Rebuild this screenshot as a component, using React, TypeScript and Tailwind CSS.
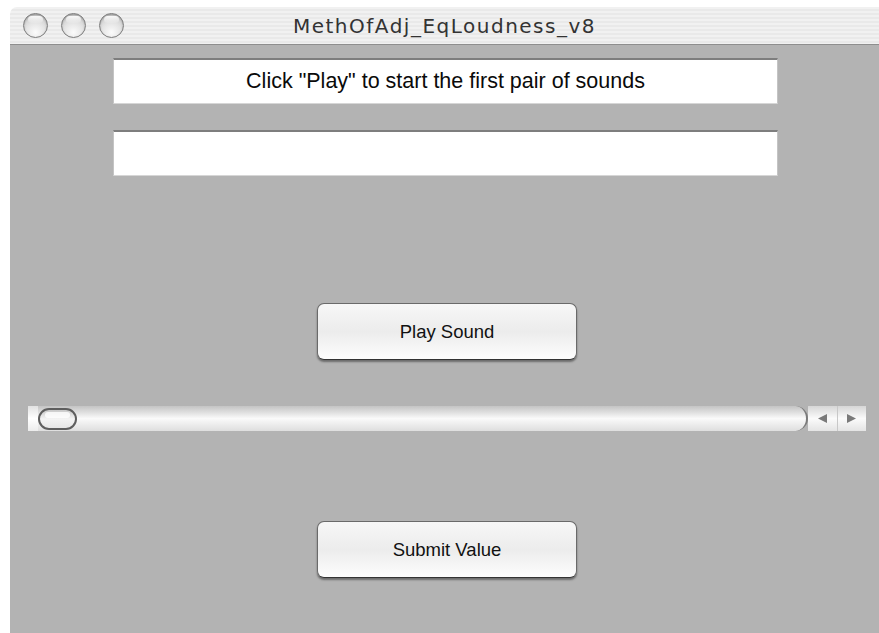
import React from 'react'

// Aqua-style window for the equal-loudness adjustment task

function TrafficLight() {
  return (
    <div className="w-[25px] h-[25px] rounded-full border border-[#7c7c7c] bg-[radial-gradient(circle_at_50%_80%,#fbfbfb_0%,#e4e4e4_45%,#bdbdbd_100%)] shadow-[inset_0_1px_2px_rgba(0,0,0,0.25)] flex justify-center">
      <div className="mt-[2px] w-[15px] h-[7px] rounded-full bg-gradient-to-b from-white/90 to-white/10" />
    </div>
  )
}

function TextField({ children }: { children?: React.ReactNode }) {
  return (
    <div className="w-[665px] h-[46px] bg-white border-t-2 border-t-[#7e7e7e] border-x border-x-[#c4c4c4] border-b border-b-[#d6d6d6] flex items-center justify-center text-[21.5px] text-[#0a0a0a] font-['Liberation_Sans',Arial,sans-serif]">
      {children}
    </div>
  )
}

function AquaButton({ label }: { label: string }) {
  return (
    <button className="w-[260px] h-[57px] rounded-[7px] border border-[#6a6a6a] border-b-[#333] bg-gradient-to-b from-[#f7f7f7] via-[#ececec] to-[#fdfdfd] shadow-[0_2px_2px_rgba(0,0,0,0.4)] flex items-center justify-center text-[18.5px] text-[#111] font-['Liberation_Sans',Arial,sans-serif]">
      {label}
    </button>
  )
}

function Scroller() {
  return (
    <div className="ml-[18px] w-[838px] h-[25px] flex">
      {/* track */}
      <div className="flex-1 flex items-center rounded-r-full border-r-2 border-r-[#7a7a7a] bg-gradient-to-b from-[#c4c4c4] via-[#fafafa] to-[#dedede]">
        <div className="h-full w-[10px] bg-gradient-to-b from-[#e2e2e2] via-white to-[#ececec]" />
        <div className="w-[39px] h-[22px] rounded-full border-2 border-[#5e5e5e] bg-gradient-to-b from-[#c8c8c8] via-[#f4f4f4] to-[#e6e6e6] flex justify-center">
          <div className="mt-[2px] w-[25px] h-[6px] rounded-full bg-white/80" />
        </div>
      </div>
      {/* arrow buttons */}
      <div className="w-[58px] flex items-center bg-gradient-to-b from-[#d6d6d6] via-[#fbfbfb] to-[#e4e4e4]">
        <div className="flex-1 flex justify-center">
          <svg width="11" height="11" viewBox="0 0 11 11"><path d="M10 1 L1 5.5 L10 10 Z" fill="#7a7a7a" /></svg>
        </div>
        <div className="w-px h-full bg-[#c8c8c8]" />
        <div className="flex-1 flex justify-center">
          <svg width="11" height="11" viewBox="0 0 11 11"><path d="M1 1 L10 5.5 L1 10 Z" fill="#7a7a7a" /></svg>
        </div>
      </div>
    </div>
  )
}

export default function App() {
  return (
    <div className="w-[879px] h-[633px] bg-white overflow-hidden pt-[7px] pl-[10px]">
      <div className="w-[869px] h-[626px] flex flex-col rounded-tl-[7px] overflow-hidden">
        {/* title bar */}
        <div className="relative h-[38px] shrink-0 flex items-center border-b border-b-[#8e8e8e] bg-[repeating-linear-gradient(180deg,#f1f1f1_0px,#f1f1f1_2px,#e9e9e9_2px,#e9e9e9_4px)]">
          <div className="flex gap-[13px] pl-[13px]">
            <TrafficLight />
            <TrafficLight />
            <TrafficLight />
          </div>
          <div className="absolute inset-0 flex items-center justify-center text-[20px] tracking-[1.5px] text-[#333] font-['DejaVu_Sans',sans-serif]">
            MethOfAdj_EqLoudness_v8
          </div>
        </div>

        {/* content */}
        <div className="flex-1 bg-[#b3b3b3] flex flex-col">
          <div className="mt-[13px] ml-[103px] flex flex-col gap-[26px]">
            <TextField>Click "Play" to start the first pair of sounds</TextField>
            <TextField />
          </div>
          <div className="mt-[127px] ml-[307px]">
            <AquaButton label="Play Sound" />
          </div>
          <div className="mt-[46px]">
            <Scroller />
          </div>
          <div className="mt-[90px] ml-[307px]">
            <AquaButton label="Submit Value" />
          </div>
        </div>
      </div>
    </div>
  )
}
